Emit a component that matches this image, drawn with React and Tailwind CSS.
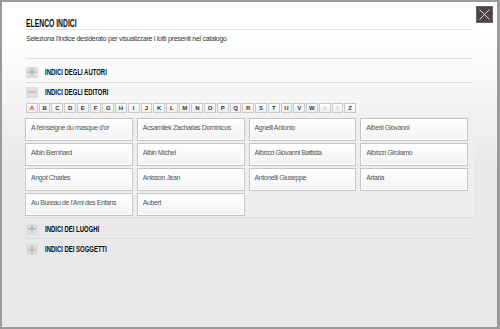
import React from 'react';

const letters = 'ABCDEFGHIJKLMNOPQRSTUVWXYZ'.split('');
const disabled = ['X', 'Y'];

const editori = [
  "A l'einseigne du masque d'or",
  'Acsamitek Zacharias Dominicus',
  'Agnelli Antonio',
  'Alberti Giovanni',
  'Albin Bernhard',
  'Albin Michel',
  'Albrizzi Giovanni Battista',
  'Albrizzi Girolamo',
  'Angot Charles',
  'Anisson Jean',
  'Antonelli Giuseppe',
  'Artaria',
  "Au Bureau de l'Ami des Enfans",
  'Aubert'
];

const ToggleIcon = ({ open }) => (
  <span className="flex h-[11px] w-[12px] shrink-0 items-center justify-center bg-[#dedede]">
    <svg width="8" height="8" viewBox="0 0 8 8">
      <path d="M0 4h8" stroke="#a8a8a8" strokeWidth="1" />
      {!open && <path d="M4 0v8" stroke="#a8a8a8" strokeWidth="1" />}
    </svg>
  </span>
);

const SectionHead = ({ label, open, className }) => (
  <div className={`flex items-center gap-[7px] ${className}`}>
    <ToggleIcon open={open} />
    <span className="inline-block origin-left scale-x-[0.7] whitespace-nowrap text-[8.5px] font-bold leading-none text-[#0a0a0a]">
      {label}
    </span>
  </div>
);

const App = () => {
  return (
    <div className="relative h-[329px] w-[500px] overflow-hidden border-2 border-r-[3px] border-[#9b9b9b] bg-gradient-to-b from-white from-10% to-[#e9e9e9] to-50% px-[24px] pt-[14px] font-['Liberation_Sans',Arial,sans-serif]">
      <button className="absolute right-[4px] top-[4px] flex h-[17px] w-[17px] items-center justify-center border border-[#6a6565] bg-[#4b4646]">
        <svg width="11" height="11" viewBox="0 0 11 11">
          <path d="M0.5 0.5l10 10M10.5 0.5l-10 10" stroke="#d8d8d8" strokeWidth="1" />
        </svg>
      </button>

      <div className="flex h-[14px] items-start border-b border-[#e4e4e4] pt-[3px] text-[10px] leading-[10px]">
        <span className="inline-block origin-left scale-x-[0.68] whitespace-nowrap font-bold text-[#0a0a0a]">
          ELENCO INDICI
        </span>
      </div>
      <div className="h-[29px] border-b border-[#e2e2e2] pt-[4px] text-[7px] leading-[10px] tracking-[-0.28px] text-[#333]">
        Seleziona l'indice desiderato per visualizzare i lotti presenti nel catalogo
      </div>

      <SectionHead label="INDICI DEGLI AUTORI" className="h-[24px] border-b border-[#dcdcdc] pt-[3px]" />

      <div className="border-b border-[#dcdcdc]">
        <SectionHead label="INDICI DEGLI EDITORI" open className="h-[17px] pt-[1px]" />
        <div className="mt-[3px] grid w-[330px] grid-cols-[repeat(26,minmax(0,1fr))] gap-px">
          {letters.map((l) => (
            <div
              key={l}
              className={`flex h-[10px] items-center justify-center border border-[#c9c9c9] bg-gradient-to-b from-white to-[#ececec] text-[6px] font-bold leading-none ${
                l === 'A' ? 'text-[#c0302c]' : disabled.includes(l) ? 'text-[#d0d0d0]' : 'text-[#333]'
              }`}
            >
              {l}
            </div>
          ))}
        </div>
        <div className="-mx-[2px] mt-[4px] bg-[#eeeeee] px-[1px] py-[1px]">
          <div className="grid w-[443px] grid-cols-4 gap-x-[4px] gap-y-[2px]">
            {editori.map((e) => (
              <div
                key={e}
                className="h-[23px] overflow-hidden whitespace-nowrap border border-[#c4c4c4] bg-gradient-to-b from-white to-[#f2f2f2] px-[5px] pt-[4px] text-[7px] leading-[10px] tracking-[-0.4px] text-[#555] shadow-[inset_0_0_0_1px_#ffffff]"
              >
                {e}
              </div>
            ))}
          </div>
        </div>
      </div>

      <SectionHead label="INDICI DEI LUOGHI" className="h-[21px] border-b border-[#dcdcdc] pt-[2px]" />
      <SectionHead label="INDICI DEI SOGGETTI" className="h-[21px]" />
    </div>
  );
};

export default App;
